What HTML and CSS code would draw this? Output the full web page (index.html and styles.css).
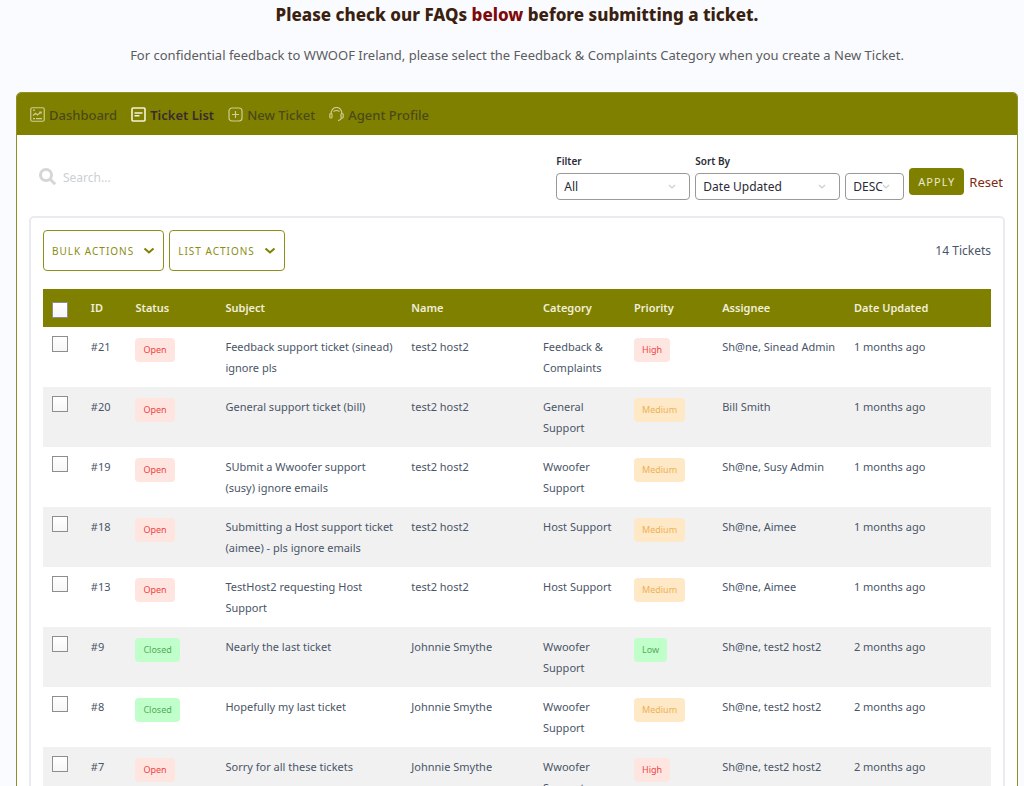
FILE: index.html
```html
<!DOCTYPE html>
<html lang="en">
<head>
<meta charset="utf-8">
<title>Ticket List</title>
<link rel="stylesheet" href="styles.css">
</head>
<body>
<div class="page">
  <header class="intro">
    <h1 class="intro-title">Please check our FAQs <a href="#faqs">below</a> before submitting a ticket.</h1>
    <p class="intro-text">For confidential feedback to WWOOF Ireland, please select the Feedback &amp; Complaints Category when you create a New Ticket.</p>
  </header>

  <main class="desk">
    <nav class="nav">
      <a class="nav-link" href="#dashboard"><svg class="nav-icon" viewBox="0 0 15 15"><rect x=".75" y=".75" width="13.5" height="13.5" rx="1.5"/><path d="M3 3.2h2M3 8.5l2.5-2.2 2 1.7 3.5-3M9.3 5h1.8v1.8M3 11.7h2M6 11.7h6"/></svg>Dashboard</a>
      <a class="nav-link active" href="#tickets"><svg class="nav-icon" viewBox="0 0 15 15"><rect x="1" y="1" width="13" height="13" rx="1"/><path d="M3.5 6h8M3.5 8.7h5"/></svg>Ticket List</a>
      <a class="nav-link" href="#new"><svg class="nav-icon" viewBox="0 0 15 15"><rect x="1" y="1" width="13" height="13" rx="3"/><path d="M7.500 4v7M4 7.500h7"/></svg>New Ticket</a>
      <a class="nav-link" href="#profile"><svg class="nav-icon" viewBox="0 0 15 15"><path d="M2.200 7V5.800a5.300 5.300 0 0 1 10.600 0V7M4.500 4.500q3-2 6 0M12.500 11q-.8 2.500-3.500 2.700"/><rect x=".8" y="6.500" width="2.200" height="4.500" rx="1.100"/><rect x="12" y="6.500" width="2.200" height="4.500" rx="1.100"/></svg>Agent Profile</a>
    </nav>

    <form class="toolbar">
      <label class="search">
        <svg class="search-icon" viewBox="0 0 18 18"><circle cx="7" cy="7" r="5.500"/><path d="M11.200 11.200l5 5"/></svg>
        <input class="search-input" type="text" placeholder="Search..." aria-label="Search">
      </label>
      <div class="filters">
        <div class="field field-filter">
          <label class="field-label" for="filter">Filter</label>
          <span class="select-wrap"><select class="select" id="filter"><option>All</option></select><svg class="select-arrow" viewBox="0 0 8 6"><path d="M1 1l3 3 3-3"/></svg></span>
        </div>
        <div class="field field-sort">
          <label class="field-label" for="sort">Sort By</label>
          <span class="select-wrap"><select class="select" id="sort"><option>Date Updated</option></select><svg class="select-arrow" viewBox="0 0 8 6"><path d="M1 1l3 3 3-3"/></svg></span>
        </div>
        <div class="field field-order">
          <span class="select-wrap"><select class="select" id="order" aria-label="Sort order"><option>DESC</option></select><svg class="select-arrow" viewBox="0 0 8 6"><path d="M1 1l3 3 3-3"/></svg></span>
        </div>
        <div class="filter-actions">
          <button class="apply" type="button">APPLY</button>
          <a class="reset" href="#reset">Reset</a>
        </div>
      </div>
    </form>

    <section class="panel">
      <div class="panel-head">
        <div class="actions">
          <button class="action" type="button">BULK ACTIONS<svg class="action-arrow" viewBox="0 0 12 8"><path d="M1.500 1.500l4.500 4 4.500-4"/></svg></button>
          <button class="action" type="button">LIST ACTIONS<svg class="action-arrow" viewBox="0 0 12 8"><path d="M1.500 1.500l4.500 4 4.500-4"/></svg></button>
        </div>
        <span class="count">14 Tickets</span>
      </div>

      <table class="tickets">
        <colgroup><col class="c-check"><col class="c-id"><col class="c-status"><col class="c-subject"><col class="c-name"><col class="c-category"><col class="c-priority"><col class="c-assignee"><col></colgroup>
        <thead>
          <tr><th><input class="check" type="checkbox" aria-label="Select all tickets"></th><th>ID</th><th>Status</th><th>Subject</th><th>Name</th><th>Category</th><th>Priority</th><th>Assignee</th><th>Date Updated</th></tr>
        </thead>
        <tbody>
          <tr><td><input class="check" type="checkbox" aria-label="Select ticket 21"></td><td>#21</td><td><span class="tag red">Open</span></td><td>Feedback support ticket (sinead) ignore pls</td><td>test2 host2</td><td>Feedback &amp; Complaints</td><td><span class="tag red">High</span></td><td>Sh@ne, Sinead Admin</td><td>1 months ago</td></tr>
          <tr><td><input class="check" type="checkbox" aria-label="Select ticket 20"></td><td>#20</td><td><span class="tag red">Open</span></td><td>General support ticket (bill)</td><td>test2 host2</td><td>General Support</td><td><span class="tag amber">Medium</span></td><td>Bill Smith</td><td>1 months ago</td></tr>
          <tr><td><input class="check" type="checkbox" aria-label="Select ticket 19"></td><td>#19</td><td><span class="tag red">Open</span></td><td>SUbmit a Wwoofer support (susy) ignore emails</td><td>test2 host2</td><td>Wwoofer Support</td><td><span class="tag amber">Medium</span></td><td>Sh@ne, Susy Admin</td><td>1 months ago</td></tr>
          <tr><td><input class="check" type="checkbox" aria-label="Select ticket 18"></td><td>#18</td><td><span class="tag red">Open</span></td><td>Submitting a Host support ticket (aimee) - pls ignore emails</td><td>test2 host2</td><td>Host Support</td><td><span class="tag amber">Medium</span></td><td>Sh@ne, Aimee</td><td>1 months ago</td></tr>
          <tr><td><input class="check" type="checkbox" aria-label="Select ticket 13"></td><td>#13</td><td><span class="tag red">Open</span></td><td>TestHost2 requesting Host Support</td><td>test2 host2</td><td>Host Support</td><td><span class="tag amber">Medium</span></td><td>Sh@ne, Aimee</td><td>1 months ago</td></tr>
          <tr><td><input class="check" type="checkbox" aria-label="Select ticket 9"></td><td>#9</td><td><span class="tag green">Closed</span></td><td>Nearly the last ticket</td><td>Johnnie Smythe</td><td>Wwoofer Support</td><td><span class="tag green">Low</span></td><td>Sh@ne, test2 host2</td><td>2 months ago</td></tr>
          <tr><td><input class="check" type="checkbox" aria-label="Select ticket 8"></td><td>#8</td><td><span class="tag green">Closed</span></td><td>Hopefully my last ticket</td><td>Johnnie Smythe</td><td>Wwoofer Support</td><td><span class="tag amber">Medium</span></td><td>Sh@ne, test2 host2</td><td>2 months ago</td></tr>
          <tr><td><input class="check" type="checkbox" aria-label="Select ticket 7"></td><td>#7</td><td><span class="tag red">Open</span></td><td>Sorry for all these tickets</td><td>Johnnie Smythe</td><td>Wwoofer Support</td><td><span class="tag red">High</span></td><td>Sh@ne, test2 host2</td><td>2 months ago</td></tr>
        </tbody>
      </table>
    </section>
  </main>
</div>
</body>
</html>
```
FILE: styles.css
```css
* { box-sizing: border-box; }

body {
  margin: 0;
  background: #fafbfe;
  color: #4a5568;
  font-family: "Noto Sans", "Open Sans", sans-serif;
  font-size: 12px;
}

.page {
  height: 100vh;
  overflow: hidden;
  padding: 0 6px 0 16px;
}

.intro { padding: 2px 0 24px; text-align: center; }
.intro-title {
  margin: 0 0 14px;
  color: #3b1f10;
  font-size: 17px;
  line-height: 26px;
  font-weight: 800;
}
.intro-title a { color: #7d0a0a; text-decoration: none; }
.intro-text { margin: 0; color: #5a5c60; font-size: 13px; line-height: 26px; }

.desk {
  background: #fff;
  border: 1px solid #8f8f24;
  border-radius: 5px;
  overflow: hidden;
}

.nav {
  display: flex;
  align-items: center;
  gap: 14px;
  height: 42px;
  padding: 1px 13px 0;
  background: #808000;
}
.nav-link {
  display: flex;
  align-items: center;
  gap: 4px;
  color: #4a4a18;
  font-size: 13px;
  font-weight: 500;
  text-decoration: none;
}
.nav-link.active { color: #392c2c; font-weight: 600; }
.nav-icon {
  width: 15px;
  height: 15px;
  fill: none;
  stroke: #cdcd96;
  stroke-width: 1.2;
}
.active .nav-icon { stroke: #f4f4dc; stroke-width: 1.6; }

.toolbar {
  display: flex;
  justify-content: space-between;
  padding: 17px 14px 16px 22px;
}
.search { display: flex; align-items: center; gap: 6px; padding-top: 2px; }
.search-icon { width: 18px; height: 18px; fill: none; stroke: #d6d6d6; stroke-width: 3; }
.search-input {
  width: 180px;
  border: 0;
  padding: 0;
  background: none;
  font: inherit;
}
.search-input::placeholder { color: #cbd0d3; opacity: 1; }

.filters { display: flex; align-items: flex-end; gap: 5px; }
.field { display: flex; flex-direction: column; gap: 3px; }
.field-filter { width: 134px; }
.field-sort { width: 145px; }
.field-order { width: 59px; }
.field-label { color: #2c2c34; font-size: 10px; line-height: 18px; font-weight: 600; }
.select-wrap { display: grid; align-items: center; }
.select {
  grid-area: 1 / 1;
  appearance: none;
  width: 100%;
  height: 27px;
  padding: 0 7px;
  border: 1px solid #999;
  border-radius: 4px;
  background: #fff;
  color: #2a2a36;
  font: inherit;
}
.select-arrow {
  grid-area: 1 / 1;
  justify-self: end;
  width: 8px;
  height: 6px;
  margin-right: 14px;
  fill: none;
  stroke: #c8d0d0;
  stroke-width: 1.2;
  pointer-events: none;
}
.filter-actions { display: flex; align-items: center; gap: 5px; padding-bottom: 5px; }
.apply {
  width: 55px;
  height: 27px;
  padding: 0;
  border: 0;
  border-radius: 4px;
  background: #808000;
  color: #e8e8c8;
  font: inherit;
  font-size: 11px;
  letter-spacing: 1px;
}
.reset { color: #7d2a10; font-size: 13px; line-height: 20px; text-decoration: none; }

.panel {
  margin: 0 12px;
  padding: 12px;
  border: 2px solid #e8ecf0;
  border-radius: 5px;
}
.panel-head { display: flex; align-items: center; justify-content: space-between; padding-bottom: 18px; }
.actions { display: flex; gap: 5px; }
.action {
  display: flex;
  align-items: center;
  gap: 9px;
  height: 41px;
  padding: 0 8px;
  border: 1px solid #8f8f1c;
  border-radius: 4px;
  background: #fff;
  color: #8c8c14;
  font: inherit;
  font-size: 10px;
  letter-spacing: 1px;
}
.action-arrow { width: 12px; height: 8px; fill: none; stroke: #808000; stroke-width: 2; }

.tickets {
  width: 100%;
  table-layout: fixed;
  border-collapse: collapse;
  font-size: 11px;
  line-height: 21px;
}
.c-check { width: 4.1%; }
.c-id { width: 4.7%; }
.c-status { width: 9.5%; }
.c-subject { width: 19.6%; }
.c-name { width: 13.9%; }
.c-category { width: 9.6%; }
.c-priority { width: 9.3%; }
.c-assignee { width: 13.9%; }

.tickets th {
  height: 38px;
  padding: 0 9px 2px;
  background: #808000;
  color: #f1efdc;
  font-weight: 600;
  text-align: left;
}
.tickets td { height: 60px; padding: 9px; vertical-align: top; }
.tickets tbody tr:nth-child(even) { background: #f1f1f1; }

.check {
  appearance: none;
  display: block;
  width: 16px;
  height: 16px;
  margin: 0;
  border: 1px solid #8e8e8e;
  background: linear-gradient(#fff, #f6f6f6);
}
.tickets th .check { margin-top: 6px; }

.tag {
  display: inline-block;
  margin-top: 2px;
  padding: 0 8px;
  border-radius: 4px;
  font-size: 9px;
  line-height: 24px;
}
.red { background: #ffe5e0; color: #f04444; }
.green { background: #c0ffca; color: #52ac58; }
.amber { background: #ffe8c6; color: #ecb257; }
```
